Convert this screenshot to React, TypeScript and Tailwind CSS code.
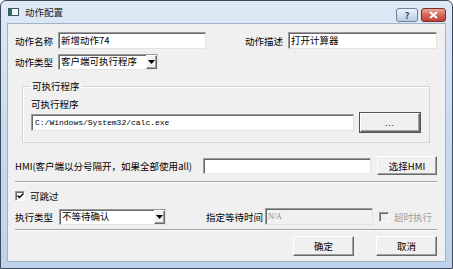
import React from 'react';

const sunken =
  'bg-white border border-t-[#9a9a9a] border-l-[#9a9a9a] border-r-[#e3e3e3] border-b-[#e3e3e3] shadow-[inset_1px_1px_0_#696969]';
const raised =
  'bg-[#f0f0f0] border border-t-white border-l-white border-r-[#696969] border-b-[#696969] shadow-[inset_-1px_-1px_0_#a0a0a0]';

function Select({ value, width }: { value: string; width: string }) {
  return (
    <div className={`flex h-[16px] items-stretch ${width} ${sunken}`}>
      <span className="flex-1 truncate pl-[2px] leading-[13px]">{value}</span>
      <span className={`flex w-[11px] items-center justify-center ${raised}`}>
        <svg width="7" height="4" viewBox="0 0 7 4">
          <path d="M0 0h7L3.5 4z" fill="#000" />
        </svg>
      </span>
    </div>
  );
}

function Check({ checked, disabled }: { checked?: boolean; disabled?: boolean }) {
  return (
    <span
      className={`flex h-[10px] w-[10px] items-center justify-center border border-t-[#9a9a9a] border-l-[#9a9a9a] border-r-white border-b-white shadow-[inset_1px_1px_0_#696969] ${
        disabled ? 'bg-[#f0f0f0]' : 'bg-white'
      }`}
    >
      {checked && (
        <svg width="7" height="6" viewBox="0 0 7 6">
          <path d="M0.5 2.5l2 2 4-4" stroke="#000" strokeWidth="1.4" fill="none" />
        </svg>
      )}
    </span>
  );
}

function Separator() {
  return <div className="h-[2px] border-t border-t-[#a0a0a0] border-b border-b-white" />;
}

export default function App() {
  return (
    <div
      className="flex h-[269px] w-[453px] flex-col overflow-hidden rounded-t-[6px] border border-[#3d4b5e] bg-gradient-to-b from-[#dfe9f5] via-[#c9daee] to-[#bed3eb] text-[9.5px] leading-[12px] text-black"
      style={{ fontFamily: '"Noto Sans CJK SC", "Liberation Sans", sans-serif' }}
    >
      {/* title bar */}
      <div className="flex h-[22px] items-center pl-[7px] pr-[6px]">
        <svg width="11" height="8" viewBox="0 0 11 8" className="mr-[6px]">
          <rect x="0.5" y="0.5" width="10" height="7" fill="#f4f7f6" stroke="#3d5a5a" />
          <rect x="1" y="1" width="3" height="6" fill="#2d6e6a" />
        </svg>
        <span className="text-[9.5px] text-[#1a1a1a]">动作配置</span>
        <div className="ml-auto flex items-start gap-[3px] self-start pt-[7px]">
          <div className="flex h-[14px] w-[22px] items-center justify-center rounded-[3px] border border-[#6f829b] bg-gradient-to-b from-[#eef3fa] to-[#b9cce4] text-[9px] font-bold leading-none text-[#3a4a60]">
            ?
          </div>
          <div className="flex h-[14px] w-[25px] items-center justify-center rounded-[3px] border border-[#7a2d24] bg-gradient-to-b from-[#e9a79a] via-[#d1665a] to-[#c0443a]">
            <svg width="9" height="8" viewBox="0 0 9 8">
              <path d="M1 1l7 6M8 1L1 7" stroke="#fff" strokeWidth="2" />
            </svg>
          </div>
        </div>
      </div>

      {/* client area */}
      <div className="mx-[6px] mb-[6px] flex flex-1 flex-col border border-[#9fb2ca] bg-[#f0f0f0] pl-[7px] pr-[8px] pt-[8px]">
        <div className="flex h-[17px] items-center justify-between">
          <div className="flex items-center">
            <span className="w-[43px]">动作名称</span>
            <div className={`h-[17px] w-[148px] pl-[2px] leading-[14px] ${sunken}`}>新增动作74</div>
          </div>
          <div className="flex items-center">
            <span className="w-[43px]">动作描述</span>
            <div className={`h-[17px] w-[149px] pl-[2px] leading-[14px] ${sunken}`}>打开计算器</div>
          </div>
        </div>

        <div className="mt-[5px] flex items-center">
          <span className="w-[43px]">动作类型</span>
          <Select value="客户端可执行程序" width="w-[100px]" />
        </div>

        <fieldset className="mx-[7px] mt-[10px] h-[63px] border border-[#cfd4d9] px-[8px] pb-[8px] pt-[6px] shadow-[inset_1px_1px_0_#fff]">
          <legend className="ml-[-1px] px-[2px]">可执行程序</legend>
          <div>可执行程序</div>
          <div className="mt-[2px] flex items-center gap-[5px]">
            <div className={`h-[17px] flex-1 pl-[3px] ${sunken}`}>
              <span className="text-[8px] leading-[14px]" style={{ fontFamily: '"Liberation Mono", monospace' }}>
                C:/Windows/System32/calc.exe
              </span>
            </div>
            <div className="border border-[#555]">
              <div className={`flex h-[19px] w-[60px] items-center justify-center ${raised}`}>
                <span className="text-[8px] leading-none tracking-[1px]">...</span>
              </div>
            </div>
          </div>
        </fieldset>

        <div className="mt-[13px] flex h-[19px] items-center">
          <span className="w-[188px]">HMI(客户端以分号隔开，如果全部使用all)</span>
          <div className={`h-[16px] w-[168px] ${sunken}`} />
          <div className={`ml-auto flex h-[19px] w-[60px] items-center justify-center ${raised}`}>选择HMI</div>
        </div>

        <div className="mt-[6px]">
          <Separator />
        </div>

        <div className="mt-[7px] flex h-[12px] items-center gap-[5px]">
          <Check checked />
          <span>可跳过</span>
        </div>

        <div className="mt-[6px] flex h-[17px] items-center">
          <span className="w-[44px]">执行类型</span>
          <Select value="不等待确认" width="w-[107px]" />
          <span className="ml-auto mr-[2px]">指定等待时间</span>
          <div className={`h-[17px] w-[108px] bg-[#f0f0f0] pl-[2px] ${sunken} !bg-[#f0f0f0]`}>
            <span className="text-[8px] leading-[14px] text-[#8a8a8a]" style={{ fontFamily: '"Liberation Serif", serif' }}>
              N/A
            </span>
          </div>
          <div className="ml-[6px] flex items-center gap-[5px]">
            <Check disabled />
            <span className="text-[#a0a0a0]">超时执行</span>
          </div>
          <span className="w-[5px]" />
        </div>

        <div className="mt-[4px]">
          <Separator />
        </div>

        <div className="mt-[5px] flex justify-end gap-[22px]">
          <div className={`flex h-[20px] w-[61px] items-center justify-center ${raised}`}>确定</div>
          <div className={`flex h-[20px] w-[61px] items-center justify-center ${raised}`}>取消</div>
        </div>
      </div>
    </div>
  );
}
